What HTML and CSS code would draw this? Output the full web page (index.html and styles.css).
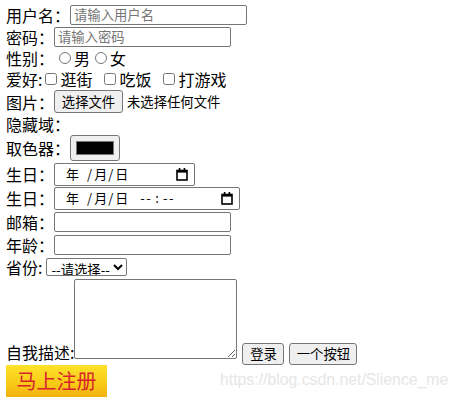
FILE: index.html
```html
<!DOCTYPE html>
<html lang="zh-CN">
<head>
<meta charset="utf-8">
<title>注册表单</title>
<link rel="stylesheet" href="styles.css">
</head>
<body>
<form class="form">
  <div class="row r1"><span class="lbl">用户名：</span><input class="text" type="text" placeholder="请输入用户名"></div>
  <div class="row r2"><span class="lbl">密码：</span><input class="text" type="password" placeholder="请输入密码"></div>
  <div class="row r3"><span class="lbl">性别：</span><input class="radio" type="radio" name="sex"><span>男</span><input class="radio" type="radio" name="sex"><span>女</span></div>
  <div class="row r4"><span class="lbl">爱好:</span><input class="check" type="checkbox"><span class="hobby">逛街</span><input class="check" type="checkbox"><span class="hobby">吃饭</span><input class="check" type="checkbox"><span>打游戏</span></div>
  <div class="row r5"><span class="lbl">图片：</span><span class="btn file-btn">选择文件</span><span class="file-note">未选择任何文件</span></div>
  <div class="row r6"><span class="lbl">隐藏域：</span></div>
  <div class="row r7"><span class="lbl">取色器：</span><span class="color"><span class="swatch"></span></span></div>
  <div class="row r8"><span class="lbl">生日：</span>
    <span class="date">
      <span class="dtext"><span class="yf">年</span><span class="sep">/</span><span>月</span><span class="sep">/</span><span>日</span></span>
      <svg class="cal" viewBox="0 0 12 13" width="12" height="13"><rect x="1" y="2.5" width="10" height="9.5" fill="none" stroke="#000" stroke-width="1.6"/><rect x="1" y="2" width="10" height="2.6" fill="#000"/><rect x="2.8" y="0" width="1.6" height="2.5" fill="#000"/><rect x="7.6" y="0" width="1.6" height="2.5" fill="#000"/></svg>
    </span>
  </div>
  <div class="row r9"><span class="lbl">生日：</span>
    <span class="date dt">
      <span class="dtext"><span class="yf">年</span><span class="sep">/</span><span>月</span><span class="sep">/</span><span>日</span><span class="tf first">--</span><span class="tc">:</span><span class="tf">--</span></span>
      <svg class="cal" viewBox="0 0 12 13" width="12" height="13"><rect x="1" y="2.5" width="10" height="9.5" fill="none" stroke="#000" stroke-width="1.6"/><rect x="1" y="2" width="10" height="2.6" fill="#000"/><rect x="2.8" y="0" width="1.6" height="2.5" fill="#000"/><rect x="7.6" y="0" width="1.6" height="2.5" fill="#000"/></svg>
    </span>
  </div>
  <div class="row r10"><span class="lbl">邮箱：</span><input class="text" type="text"></div>
  <div class="row r11"><span class="lbl">年龄：</span><input class="text" type="text"></div>
  <div class="row r12"><span class="lbl">省份:</span><select class="sel"><option>--请选择--</option></select></div>
  <div class="row r13"><span class="lbl desc">自我描述:</span><textarea class="area"></textarea><span class="btn b1">登录</span><span class="btn b2">一个按钮</span></div>
  <div class="row r14"><span class="reg">马上注册</span></div>
</form>
<div class="watermark">https://blog.csdn.net/Slience_me</div>
</body>
</html>
```
FILE: styles.css
```css
html, body {
  background: #fff;
}
body {
  margin: 3px 6px;
  font-family: "Noto Sans CJK SC", "Noto Sans", sans-serif;
  font-size: 16px;
  color: #000;
  position: relative;
}
.form {
  display: flex;
  flex-direction: column;
}
.row {
  display: flex;
  align-items: center;
  line-height: 16px;
  white-space: nowrap;
}
.r1 { height: 23px; }
.r2 { height: 21px; }
.r3 { height: 21px; }
.r4 { height: 21px; }
.r5 { height: 25px; }
.r6 { height: 19px; }
.r7 { height: 29px; }
.r8 { height: 24px; }
.r9 { height: 24px; }
.r10 { height: 23px; }
.r11 { height: 23px; }
.r12 { height: 22px; }
.r13 { height: 87px; align-items: flex-end; }
.r14 { height: 32px; }

.text {
  box-sizing: border-box;
  width: 177px;
  height: 20px;
  margin: 0;
  padding: 0 3px;
  border: 1px solid #767676;
  border-radius: 2px;
  font-family: "Noto Sans CJK SC", sans-serif;
  font-size: 13.33px;
  background: #fff;
}
.text::placeholder { color: #757575; }

.radio {
  width: 12px;
  height: 12px;
  margin: 0 3px 0 5px;
}
.check {
  width: 12px;
  height: 12px;
  margin: 0 3px 0 3px;
}
.hobby { margin-right: 9px; }

.btn {
  box-sizing: border-box;
  display: inline-flex;
  align-items: center;
  justify-content: center;
  background: #efefef;
  border: 1px solid #767676;
  border-radius: 3px;
  font-size: 13.33px;
  line-height: 14px;
}
.file-btn { width: 69px; height: 23px; }
.file-note { font-size: 13.33px; margin-left: 4px; }

.color {
  box-sizing: border-box;
  width: 50px;
  height: 26px;
  background: #efefef;
  border: 1px solid #767676;
  border-radius: 3px;
  display: flex;
  align-items: center;
  justify-content: center;
}
.swatch {
  width: 38px;
  height: 14px;
  background: #000;
  border: 1px solid #777;
  box-sizing: border-box;
}

.date {
  box-sizing: border-box;
  width: 141px;
  height: 23px;
  border: 1px solid #767676;
  border-radius: 2px;
  display: flex;
  align-items: center;
  padding: 0 6px 0 11px;
  font-size: 13px;
}
.date.dt { width: 186px; }
.dtext { display: flex; align-items: center; flex: 1; }
.yf { width: 20px; }
.sep { margin: 0 2px 0 1px; }
.tf { letter-spacing: 1.5px; }
.tf.first { margin-left: 12px; }
.tc { margin: 0 4px 0 3px; }
.cal { flex: none; }

.sel {
  box-sizing: border-box;
  width: 81px;
  height: 18px;
  margin: 0 0 0 4px;
  padding: 0;
  border: 1px solid #767676;
  border-radius: 2px;
  background: #fff;
  font-family: "Noto Sans CJK SC", sans-serif;
  font-size: 13.33px;
  color: #000;
}

.desc { margin-bottom: 5px; }
.area {
  box-sizing: border-box;
  width: 163px;
  height: 80px;
  margin: 0 0 6px 0;
  border: 1px solid #767676;
  border-radius: 2px;
  padding: 2px;
  font-size: 13.33px;
}
.b1 { width: 42px; height: 22px; margin-left: 5px; }
.b2 { width: 68px; height: 22px; margin-left: 5px; }

.reg {
  box-sizing: border-box;
  width: 101px;
  height: 32px;
  display: flex;
  align-items: center;
  justify-content: center;
  background: linear-gradient(#fde22a, #f9cc17 55%, #f2b10e);
  color: #d6242e;
  font-size: 20px;
}

.watermark {
  position: absolute;
  left: 214px;
  top: 368px;
  font-family: "Liberation Sans", Arial, sans-serif;
  font-size: 15.8px;
  color: #e6e6e6;
  white-space: nowrap;
}
```
